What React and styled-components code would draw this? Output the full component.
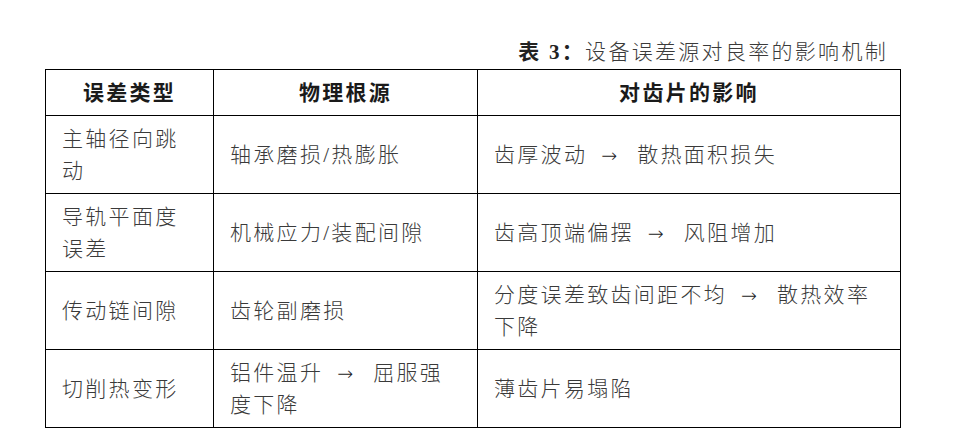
import React from "react";
import styled, { createGlobalStyle } from "styled-components";

const GlobalStyle = createGlobalStyle`
  html, body { margin: 0; padding: 0; background: #fff; }
  body { font-family: "Liberation Serif", "Noto Sans CJK SC", serif; }
`;

const ROWS = [
  { type: "主轴径向跳动", cause: "轴承磨损/热膨胀", effect: "齿厚波动 → 散热面积损失" },
  { type: "导轨平面度误差", cause: "机械应力/装配间隙", effect: "齿高顶端偏摆 → 风阻增加" },
  { type: "传动链间隙", cause: "齿轮副磨损", effect: "分度误差致齿间距不均 → 散热效率下降" },
  { type: "切削热变形", cause: "铝件温升 → 屈服强度下降", effect: "薄齿片易塌陷" },
];

const Page = styled.div`
  padding: 36px 0 0 45px;
  width: 855px;
`;

const Caption = styled.div`
  text-align: right;
  padding-right: 12px;
  font-size: 21px;
  line-height: 32px;
  letter-spacing: 2.3px;
  color: #3a3a3a;
  font-weight: 300;
`;

const CaptionLabel = styled.span`
  font-weight: 700;
  color: #222;
`;

const Table = styled.table`
  width: 855px;
  border-collapse: collapse;
  table-layout: fixed;
  margin-top: 1px;
  font-size: 21px;
  letter-spacing: 2.3px;
`;

const HeadCell = styled.th`
  height: 45px;
  border: 1px solid #000;
  padding: 0;
  font-weight: 700;
  color: #1a1a1a;
  text-align: center;
  vertical-align: middle;
  line-height: 32px;
`;

const Cell = styled.td`
  height: 77px;
  border: 1px solid #000;
  padding: 0 16px;
  color: #3a3a3a;
  font-weight: 300;
  vertical-align: middle;
  line-height: 32px;
  text-align: left;
`;

const Arrow = styled.span`
  display: inline-block;
  width: 20px;
  margin: 0 18px 0 12px;
  letter-spacing: 0;
  text-align: center;
  font-family: "DejaVu Sans", sans-serif;
  font-size: 19px;
  color: #222;
`;

function Text({ value }) {
  const parts = value.split(" → ");
  return parts.map((p, i) => (
    <React.Fragment key={i}>
      {i > 0 && <Arrow>→</Arrow>}
      {p}
    </React.Fragment>
  ));
}

export default function App() {
  return (
    <>
      <GlobalStyle />
      <Page>
        <Caption>
          <CaptionLabel>表 3：</CaptionLabel>设备误差源对良率的影响机制
        </Caption>
        <Table>
          <colgroup>
            <col style={{ width: 168 }} />
            <col style={{ width: 264 }} />
            <col style={{ width: 423 }} />
          </colgroup>
          <thead>
            <tr>
              <HeadCell>误差类型</HeadCell>
              <HeadCell>物理根源</HeadCell>
              <HeadCell>对齿片的影响</HeadCell>
            </tr>
          </thead>
          <tbody>
            {ROWS.map(r => (
              <tr key={r.type}>
                <Cell>{r.type}</Cell>
                <Cell><Text value={r.cause} /></Cell>
                <Cell><Text value={r.effect} /></Cell>
              </tr>
            ))}
          </tbody>
        </Table>
      </Page>
    </>
  );
}
